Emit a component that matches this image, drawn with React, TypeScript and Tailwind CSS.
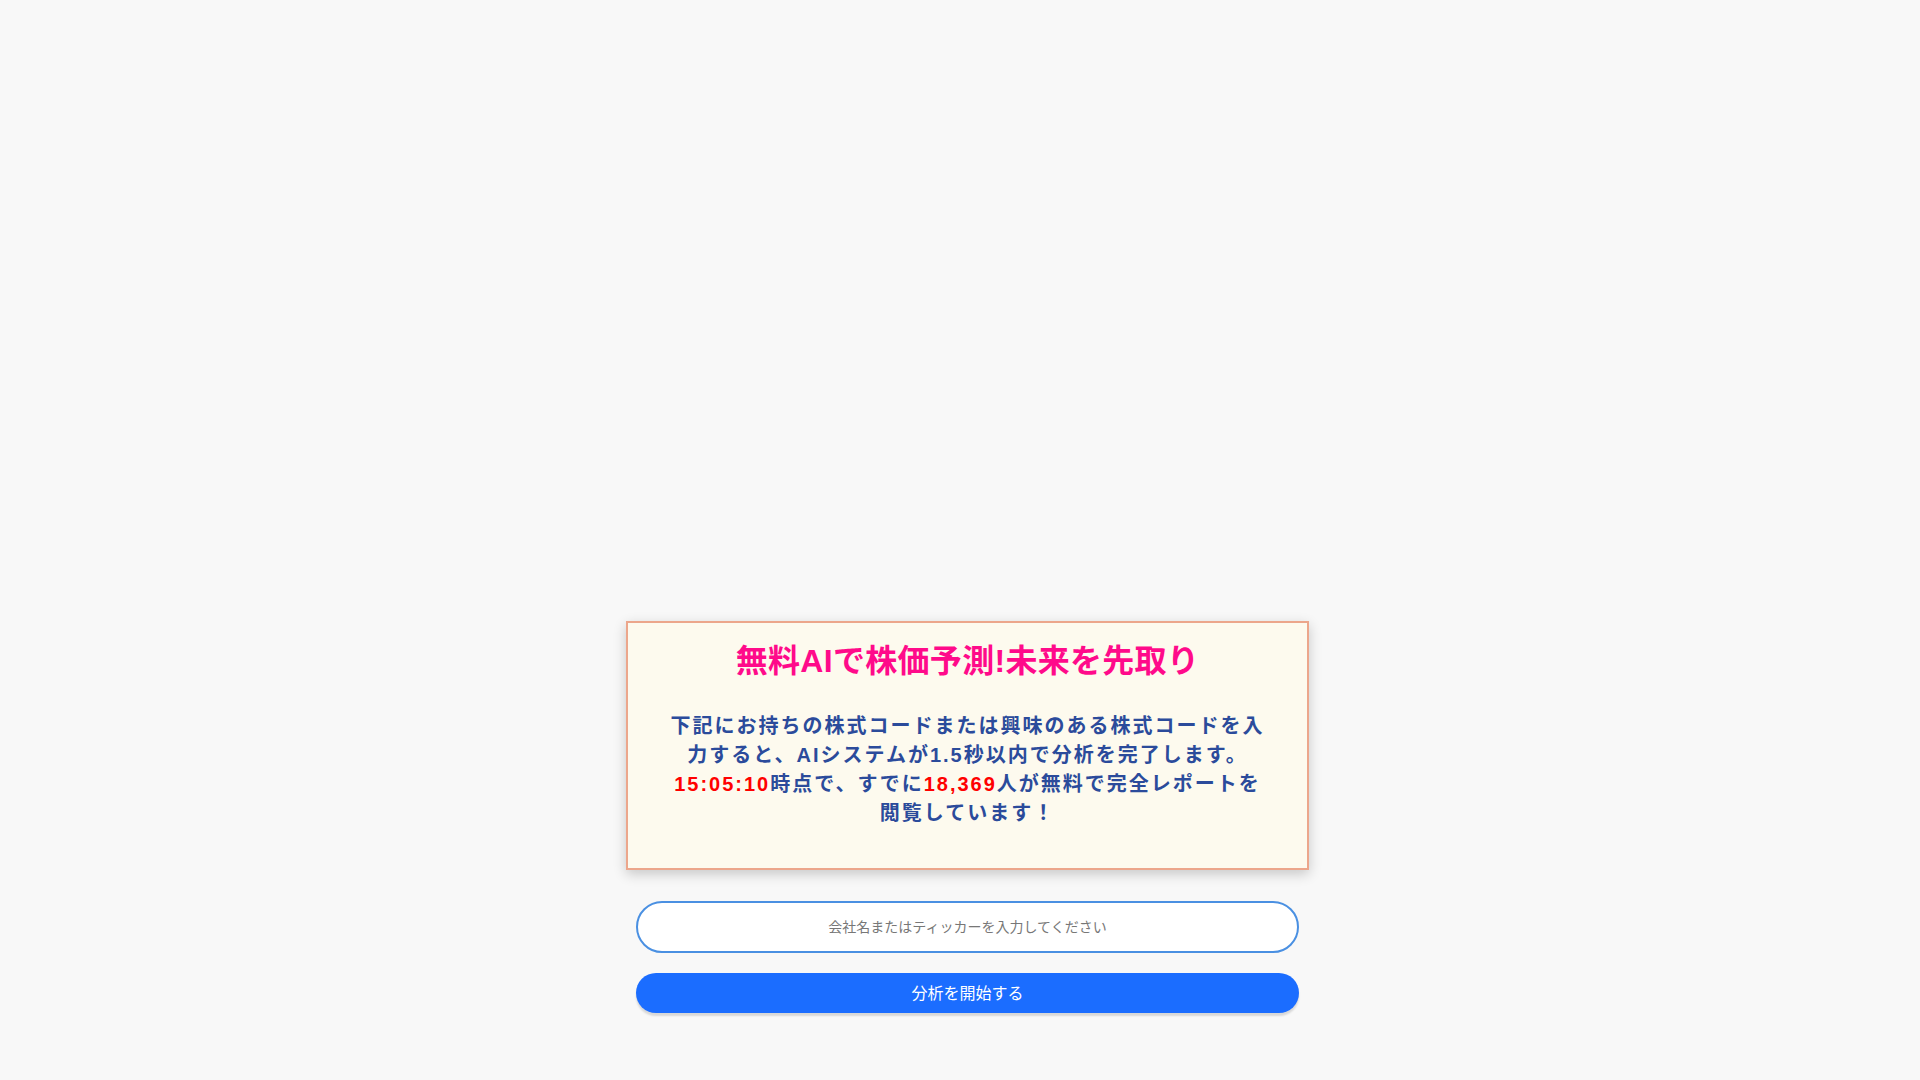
import React from "react";

const Hero = () => {
  return (
    <div className="w-full border-2 border-[#eca68b] bg-[#fdfaee] shadow-[0_4px_12px_rgba(0,0,0,0.2)] pt-4 pb-10 text-center">
      <h1 className="text-[32px] leading-[45px] font-bold tracking-[0.3px] text-[#ff0a8a]">
        無料AIで株価予測!未来を先取り
      </h1>
      <p className="mt-[28px] px-[41px] text-[20px] leading-[29px] font-bold tracking-[2px] text-[#2b4b9b]">
        下記にお持ちの株式コードまたは興味のある株式コードを入力すると、AIシステムが1.5秒以内で分析を完了します。
        <span className="text-[#ff0000]">15:05:10</span>時点で、すでに
        <span className="text-[#ff0000]">18,369</span>人が無料で完全レポートを閲覧しています！
      </p>
    </div>
  );
};

const SearchForm = () => {
  return (
    <div className="mt-[31px] flex flex-col gap-[20px] px-[10px]">
      <input
        type="text"
        placeholder="会社名またはティッカーを入力してください"
        className="h-[52px] w-full rounded-full border-2 border-[#4a90e2] bg-white px-5 pb-[2px] text-center text-[14px] text-[#333] outline-none placeholder:text-[#777]"
        style={{ fontFamily: '"Noto Sans CJK JP", "Liberation Sans", sans-serif' }}
      />
      <button
        type="button"
        className="h-[40px] w-full rounded-full bg-[#1b6dff] pb-[3px] text-[16px] text-white shadow-[0_3px_2px_rgba(0,0,0,0.13)]"
        style={{ fontFamily: '"Noto Sans CJK JP", "Liberation Sans", sans-serif' }}
      >
        分析を開始する
      </button>
    </div>
  );
};

export default function App() {
  return (
    <div
      className="min-h-screen w-full bg-[#f8f8f8] pt-[621px] pl-[15px] flex justify-center"
      style={{ fontFamily: '"Liberation Sans", "Noto Sans CJK JP", sans-serif' }}
    >
      <div className="w-[683px]">
        <Hero />
        <SearchForm />
      </div>
    </div>
  );
}
